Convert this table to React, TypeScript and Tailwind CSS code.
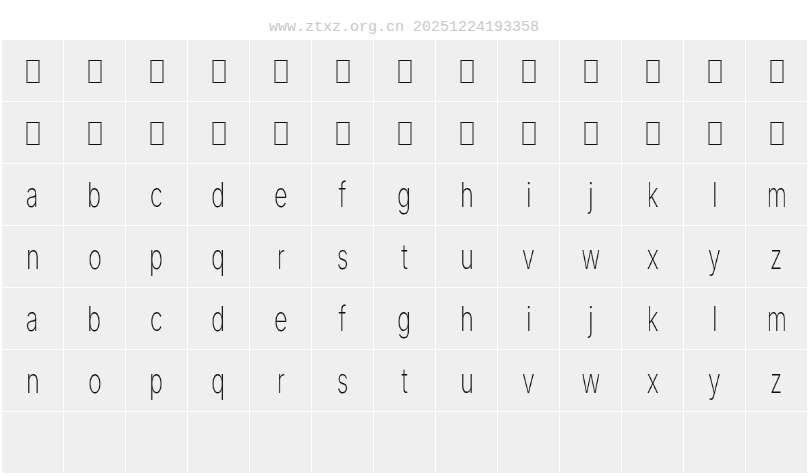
const lower1 = "abcdefghijklm".split("");
const lower2 = "nopqrstuvwxyz".split("");

type Cell = { kind: "tofu" } | { kind: "char"; ch: string } | { kind: "empty" };

const rows: Cell[][] = [
  Array.from({ length: 13 }, () => ({ kind: "tofu" as const })),
  Array.from({ length: 13 }, () => ({ kind: "tofu" as const })),
  lower1.map((ch) => ({ kind: "char" as const, ch })),
  lower2.map((ch) => ({ kind: "char" as const, ch })),
  lower1.map((ch) => ({ kind: "char" as const, ch })),
  lower2.map((ch) => ({ kind: "char" as const, ch })),
  Array.from({ length: 13 }, () => ({ kind: "empty" as const })),
];

const GlyphCell = (props: { cell: Cell }) => {
  const { cell } = props;
  return (
    <div className="flex items-center justify-center bg-[#efefef]">
      {cell.kind === "tofu" && (
        <div className="mt-[1px] h-[23px] w-[14px] border-x-2 border-y border-x-[#8a8a8a] border-y-[#111]" />
      )}
      {cell.kind === "char" && (
        <span
          className="inline-block scale-x-[0.68] text-[34px] leading-none font-extralight text-[#111] will-change-transform"
          style={{ fontFamily: "Inter, 'Noto Sans', sans-serif" }}
        >
          {cell.ch}
        </span>
      )}
    </div>
  );
};

export default function App() {
  return (
    <div className="h-[476px] w-[808px] overflow-hidden bg-white">
      <div className="flex h-[40px] justify-center pt-[18px]">
        <span
          className="text-[15px] leading-[20px] text-[#c8c8c8]"
          style={{ fontFamily: "'Liberation Mono', monospace" }}
        >
          www.ztxz.org.cn 20251224193358
        </span>
      </div>
      <div className="grid grid-cols-[repeat(13,61px)] auto-rows-[61px] gap-px pl-[2px]">
        {rows.map((row, r) =>
          row.map((cell, c) => <GlyphCell key={`${r}-${c}`} cell={cell} />),
        )}
      </div>
    </div>
  );
}
